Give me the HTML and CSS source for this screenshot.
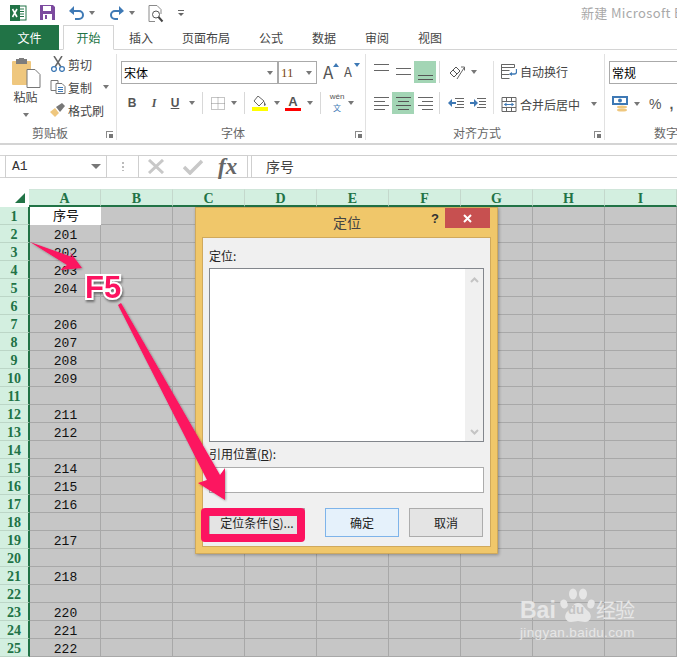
FILE: index.html
```html
<!DOCTYPE html>
<html lang="zh">
<head>
<meta charset="utf-8">
<title>定位</title>
<link rel="stylesheet" href="styles.css">
</head>
<body>
<div class="app">
  <header class="titlebar">
    <svg class="qi xl" width="17" height="16" viewBox="0 0 17 16"><rect x="6" y="1" width="10" height="14" fill="#fff" stroke="#217346"/><path d="M9 4h5M9 6.500h5M9 9h5M9 11.500h5" stroke="#217346"/><rect x="0" y="0" width="10" height="16" fill="#217346"/><path d="M2.500 4l4.500 8M7 4l-4.500 8" stroke="#fff" stroke-width="1.600"/></svg>
    <svg class="qi sv" width="15" height="15" viewBox="0 0 15 15"><path d="M0 0h13l2 2v13H0z" fill="#7c4b9f"/><rect x="3" y="1" width="8" height="5" fill="#fff"/><rect x="3" y="9" width="9" height="6" fill="#fff"/><rect x="5" y="10" width="2" height="4" fill="#7c4b9f"/></svg>
    <svg class="qi un" width="15" height="14" viewBox="0 0 15 14"><path d="M2 5h8a3.500 3.500 0 0 1 0 8H6" fill="none" stroke="#3e79b5" stroke-width="2"/><path d="M5 0v9L0 5z" fill="#3e79b5"/></svg>
    <i class="caret cq1"></i>
    <svg class="qi re" width="15" height="14" viewBox="0 0 15 14"><path d="M13 5H6a3.500 3.500 0 0 0 0 8h3" fill="none" stroke="#3e79b5" stroke-width="2"/><path d="M10 0v9l5-4z" fill="#3e79b5"/></svg>
    <i class="caret cq2"></i>
    <svg class="qi pv" width="16" height="18" viewBox="0 0 16 18"><path d="M1 .500h8l4 4V9M1 .500v16h6" fill="none" stroke="#8a8a8a"/><circle cx="8" cy="9.500" r="3.500" fill="#fff" stroke="#555"/><path d="M10.500 12l4 4.500" stroke="#444" stroke-width="2"/></svg>
    <svg class="qi cu" width="7" height="7" viewBox="0 0 7 7"><path d="M0 .500h6" stroke="#666"/><path d="M0 3h6L3 6z" fill="#666"/></svg>
    <span class="doc">新建 Microsoft E</span>
  </header>

  <nav class="tabs">
    <span class="tab file">文件</span>
    <span class="tab active">开始</span>
    <span class="tab t1">插入</span>
    <span class="tab t2">页面布局</span>
    <span class="tab t3">公式</span>
    <span class="tab t3">数据</span>
    <span class="tab t3">审阅</span>
    <span class="tab t3">视图</span>
  </nav>

  <section class="ribbon">
    <div class="group g-clip">
      <div class="g-body clip-body">
        <div class="paste">
          <svg width="29" height="30" viewBox="0 0 29 30"><rect x="0" y="3" width="19" height="24" rx="1" fill="#efc77e"/><rect x="4" y="1" width="11" height="5" fill="#7d7d7d"/><rect x="7" y="0" width="5" height="3" fill="#7d7d7d"/><path d="M15 11.500h8l5 5v13H15z" fill="#fff" stroke="#777"/></svg>
          <span class="paste-label">粘贴</span>
          <i class="caret"></i>
        </div>
        <div class="clip-list">
          <div class="clip-row">
            <svg width="14" height="16" viewBox="0 0 14 16"><path d="M3 0l7 11M11 0L4 11" stroke="#666" stroke-width="1.500"/><circle cx="3" cy="13" r="2.400" fill="#fff" stroke="#3e79b5" stroke-width="1.300"/><circle cx="11" cy="13" r="2.400" fill="#fff" stroke="#3e79b5" stroke-width="1.300"/></svg>
            <span>剪切</span>
          </div>
          <div class="clip-row">
            <svg width="15" height="14" viewBox="0 0 15 14"><path d="M.500.500h7v10h-7z" fill="#fff" stroke="#777"/><path d="M5.500 3.500h6l3 3v7h-9z" fill="#fff" stroke="#777"/><path d="M7.500 7.500h5M7.500 9.500h5M7.500 11.500h5" stroke="#3e79b5"/></svg>
            <span>复制</span><i class="caret c-copy"></i>
          </div>
          <div class="clip-row">
            <svg width="16" height="14" viewBox="0 0 16 14"><path d="M0 9l5-4 4 5-4 4z" fill="#efc77e"/><path d="M6 4l6-4 3 3-5 6z" fill="#777"/></svg>
            <span>格式刷</span>
          </div>
        </div>
      </div>
      <div class="g-foot"><span class="g-name n-clip">剪贴板</span><i class="launch"></i></div>
    </div>

    <div class="group g-font">
      <div class="g-body font-body">
        <div class="font-row1">
          <div class="combo c-name">宋体<i class="caret"></i></div>
          <div class="combo c-size">11<i class="caret"></i></div>
          <span class="grow">A<i class="up"></i></span>
          <span class="shrink">A<i class="down"></i></span>
        </div>
        <div class="font-row2">
          <b class="fb">B</b>
          <i class="fi">I</i>
          <u class="fu">U</u>
          <i class="caret c-t"></i>
          <i class="vsep"></i>
          <svg class="bord" width="14" height="13" viewBox="0 0 14 13"><path d="M.500.500h13v12H.500zM7 .500v12M.500 6.500h13" fill="none" stroke="#8a8a8a" stroke-dasharray="1 1"/></svg>
          <i class="caret c-s"></i>
          <i class="vsep"></i>
          <svg class="fill" width="16" height="15" viewBox="0 0 16 15"><path d="M6 0l6 5-5 5-5-5z" fill="#fff" stroke="#666"/><path d="M12 5l2 4-2 1z" fill="#666"/><rect y="11" width="16" height="4" fill="#ff0"/></svg>
          <i class="caret c-s"></i>
          <span class="fcolor">A</span>
          <i class="caret c-s"></i>
          <i class="vsep"></i>
          <span class="wen"><small>wén</small><em>文</em></span>
          <i class="caret c-w"></i>
        </div>
      </div>
      <div class="g-foot"><span class="g-name n-font">字体</span><i class="launch"></i></div>
    </div>

    <div class="group g-align">
      <div class="g-body align-body">
        <div class="al-col">
          <div class="al-row">
            <span class="al top"><svg width="15" height="8" viewBox="0 0 15 8"><path d="M0 .500h15M0 6.500h15" stroke="#666"/></svg></span>
            <span class="al"><svg width="15" height="8" viewBox="0 0 15 8"><path d="M0 .500h15M0 6.500h15" stroke="#666"/></svg></span>
            <span class="al on bottom"><svg width="15" height="8" viewBox="0 0 15 8"><path d="M0 .500h15M0 4.500h15" stroke="#555"/></svg></span>
            <i class="vsep sep-a"></i>
            <svg class="orient" width="16" height="15" viewBox="0 0 16 15"><path d="M1 8l6-6 4 4-6 6zM4 5l4 4" fill="none" stroke="#555"/><path d="M8 14L15 3M12 2h3.500v3.500" fill="none" stroke="#666"/></svg>
            <i class="caret c-s"></i>
          </div>
          <div class="al-row r2">
            <span class="al"><svg width="15" height="14" viewBox="0 0 15 14"><path d="M0 1.500h15M0 5.500h11M0 9.500h15M0 13.500h11" stroke="#666"/></svg></span>
            <span class="al on"><svg width="15" height="14" viewBox="0 0 15 14"><path d="M0 1.500h15M2 5.500h11M0 9.500h15M2 13.500h11" stroke="#555"/></svg></span>
            <span class="al"><svg width="15" height="14" viewBox="0 0 15 14"><path d="M0 1.500h15M4 5.500h11M0 9.500h15M4 13.500h11" stroke="#666"/></svg></span>
            <i class="vsep sep-a"></i>
            <svg class="ind" width="16" height="11" viewBox="0 0 16 11"><path d="M7 .500h9M9 3.500h7M9 6.500h7M7 9.500h9" stroke="#666"/><path d="M8 5H3" stroke="#3e79b5" stroke-width="2"/><path d="M4 1v8L0 5z" fill="#3e79b5"/></svg>
            <svg class="ind2" width="16" height="11" viewBox="0 0 16 11"><path d="M7 .500h9M9 3.500h7M9 6.500h7M7 9.500h9" stroke="#666"/><path d="M0 5h4" stroke="#3e79b5" stroke-width="2"/><path d="M4 1v8l4-4z" fill="#3e79b5"/></svg>
          </div>
        </div>
        <i class="vsep tall"></i>
        <div class="wrap-col">
          <div class="wrap-row">
            <svg width="16" height="15" viewBox="0 0 16 15"><path d="M.500.500h13v3H.500zM.500 6.500h8M.500 10.500h8M.500 14.500h8M.500.500v14" fill="none" stroke="#666"/><path d="M15.500 5v3a2 2 0 0 1-2 2H9" fill="none" stroke="#3e79b5" stroke-width="1.300"/><path d="M11 8v4L8 10z" fill="#3e79b5"/></svg>
            <span>自动换行</span>
          </div>
          <div class="wrap-row r2">
            <svg width="15" height="15" viewBox="0 0 15 15"><path d="M.500.500h14v14H.500zM.500 4.500h14M.500 10.500h14M5 .500v4M10 .500v4M5 10.500v4M10 10.500v4" fill="none" stroke="#666"/><path d="M3 7.500h9" stroke="#3e79b5"/><path d="M5 5.500v4L2.500 7.500zM10 5.500v4l2.500-2z" fill="#3e79b5"/></svg>
            <span>合并后居中</span><i class="caret c-merge"></i>
          </div>
        </div>
      </div>
      <div class="g-foot"><span class="g-name n-align">对齐方式</span><i class="launch"></i></div>
    </div>

    <div class="group g-num">
      <div class="g-body num-body">
        <div class="combo c-num">常规</div>
        <div class="num-row">
          <svg width="16" height="16" viewBox="0 0 16 16"><rect width="16" height="9" fill="#3e79b5"/><rect x="2" y="2" width="12" height="5" fill="#fff"/><circle cx="8" cy="4.500" r="2" fill="#3e79b5"/><ellipse cx="10" cy="11" rx="5" ry="1.500" fill="#efc77e"/><ellipse cx="10" cy="14" rx="5" ry="1.500" fill="#efc77e"/></svg>
          <i class="caret c-s"></i>
          <span class="pct">%</span>
          <span class="cma">,</span>
        </div>
      </div>
      <div class="g-foot"><span class="g-name n-num">数字</span></div>
    </div>
  </section>

  <section class="formula">
    <div class="namebox">A1<i class="caret big"></i></div>
    <span class="grip"></span>
    <div class="fx-btns">
      <svg width="18" height="15" viewBox="0 0 18 15"><path d="M2 1l14 13M16 1L2 14" stroke="#c8c8c8" stroke-width="3"/></svg>
      <svg width="20" height="16" viewBox="0 0 20 16"><path d="M1 8l6 6L19 2" fill="none" stroke="#c8c8c8" stroke-width="3.500"/></svg>
      <span class="fx">fx</span>
    </div>
    <div class="finput">序号</div>
  </section>

  <section class="sheet">
    <div class="colhead">
      <div class="corner"><i></i></div>
      <span class="ch first">A</span><span class="ch">B</span><span class="ch">C</span><span class="ch">D</span><span class="ch">E</span><span class="ch">F</span><span class="ch">G</span><span class="ch">H</span><span class="ch">I</span>
    </div>
    <div class="rows">
      <div class="row"><span class="rh">1</span><span class="ca hd">序号</span><span class="rest"></span></div>
      <div class="row"><span class="rh">2</span><span class="ca">201</span><span class="rest"></span></div>
      <div class="row"><span class="rh">3</span><span class="ca">202</span><span class="rest"></span></div>
      <div class="row"><span class="rh">4</span><span class="ca">203</span><span class="rest"></span></div>
      <div class="row"><span class="rh">5</span><span class="ca">204</span><span class="rest"></span></div>
      <div class="row"><span class="rh">6</span><span class="ca"></span><span class="rest"></span></div>
      <div class="row"><span class="rh">7</span><span class="ca">206</span><span class="rest"></span></div>
      <div class="row"><span class="rh">8</span><span class="ca">207</span><span class="rest"></span></div>
      <div class="row"><span class="rh">9</span><span class="ca">208</span><span class="rest"></span></div>
      <div class="row"><span class="rh">10</span><span class="ca">209</span><span class="rest"></span></div>
      <div class="row"><span class="rh">11</span><span class="ca"></span><span class="rest"></span></div>
      <div class="row"><span class="rh">12</span><span class="ca">211</span><span class="rest"></span></div>
      <div class="row"><span class="rh">13</span><span class="ca">212</span><span class="rest"></span></div>
      <div class="row"><span class="rh">14</span><span class="ca"></span><span class="rest"></span></div>
      <div class="row"><span class="rh">15</span><span class="ca">214</span><span class="rest"></span></div>
      <div class="row"><span class="rh">16</span><span class="ca">215</span><span class="rest"></span></div>
      <div class="row"><span class="rh">17</span><span class="ca">216</span><span class="rest"></span></div>
      <div class="row"><span class="rh">18</span><span class="ca"></span><span class="rest"></span></div>
      <div class="row"><span class="rh">19</span><span class="ca">217</span><span class="rest"></span></div>
      <div class="row"><span class="rh">20</span><span class="ca"></span><span class="rest"></span></div>
      <div class="row"><span class="rh">21</span><span class="ca">218</span><span class="rest"></span></div>
      <div class="row"><span class="rh">22</span><span class="ca"></span><span class="rest"></span></div>
      <div class="row"><span class="rh">23</span><span class="ca">220</span><span class="rest"></span></div>
      <div class="row"><span class="rh">24</span><span class="ca">221</span><span class="rest"></span></div>
      <div class="row"><span class="rh">25</span><span class="ca">222</span><span class="rest"></span></div>
    </div>
  </section>

  <div class="dialog">
    <div class="d-title">
      <span class="d-name">定位</span>
      <span class="d-help">?</span>
      <span class="d-close"><svg width="9" height="9" viewBox="0 0 9 9"><path d="M1 1l7 7M8 1L1 8" stroke="#fff" stroke-width="2"/></svg></span>
    </div>
    <div class="d-panel">
      <label class="d-label">定位:</label>
      <div class="d-list">
        <div class="d-scroll">
          <svg width="9" height="6" viewBox="0 0 9 6"><path d="M1 5l3.500-3.500L8 5" fill="none" stroke="#c4c4c4" stroke-width="2"/></svg>
          <svg width="9" height="6" viewBox="0 0 9 6"><path d="M1 1l3.500 3.500L8 1" fill="none" stroke="#c4c4c4" stroke-width="2"/></svg>
        </div>
      </div>
      <label class="d-label d-ref">引用位置(<u>R</u>):</label>
      <div class="d-input"></div>
      <div class="d-btns">
        <button class="btn special">定位条件(<u>S</u>)...</button>
        <button class="btn ok">确定</button>
        <button class="btn">取消</button>
      </div>
    </div>
  </div>

  <svg class="arrows" width="677" height="657" viewBox="0 0 677 657">
    <defs><filter id="sh" x="-20%" y="-20%" width="140%" height="140%"><feDropShadow dx="1" dy="1" stdDeviation="1" flood-color="#000" flood-opacity=".35"/></filter></defs>
    <g fill="#fc1360" filter="url(#sh)">
      <path d="M30 242L72 257L70 252L82 268L60 270L67 265Z"/>
      <path d="M118 305L121 303L220 475L225 468L225 500L198 483L207 480Z"/>
    </g>
  </svg>
  <span class="f5">F5</span>
  <div class="callout"></div>

  <div class="mark">
    <div class="mark-top">
      <span class="m-bai">Bai</span>
      <svg class="paw" width="36" height="40" viewBox="0 0 36 40"><ellipse cx="4" cy="19" rx="3.500" ry="4.500" fill="#e6e6e6" transform="rotate(-20 4 19)"/><ellipse cx="13" cy="9" rx="4" ry="5.500" fill="#e6e6e6"/><ellipse cx="23" cy="9" rx="4" ry="5.500" fill="#e6e6e6"/><ellipse cx="31" cy="19" rx="3.500" ry="4.500" fill="#e6e6e6" transform="rotate(20 31 19)"/><path d="M18 18c5 0 6 5 10 8 5 4 3 11-3 11-3 0-5-1-7-1s-4 1-7 1c-6 0-8-7-3-11 4-3 5-8 10-8z" fill="#e6e6e6"/></svg>
      <span class="m-du">du</span>
      <span class="m-cn">经验</span>
    </div>
    <div class="m-url">jingyan.baidu.com</div>
  </div>
</div>
</body>
</html>
```
FILE: styles.css
```css
* { box-sizing: border-box; }
html, body { margin: 0; padding: 0; background: #fff; }
body { font-family: "Noto Sans CJK SC", "Noto Sans", sans-serif; font-size: 12px; color: #444; }
.app { position: relative; width: 677px; height: 657px; overflow: hidden; }
i { font-style: normal; }

.caret { display: inline-block; width: 0; height: 0; border-left: 3.5px solid transparent; border-right: 3.5px solid transparent; border-top: 4px solid #777; flex: none; }
.caret.big { border-left-width: 5px; border-right-width: 5px; border-top-width: 5px; }
.vsep { display: block; width: 1px; height: 22px; background: #d8d8d8; flex: none; }

/* title bar */
.titlebar { height: 25px; display: flex; align-items: center; padding-left: 10px; white-space: nowrap; }
.qi { flex: none; }
.sv { margin-left: 13px; }
.un { margin-left: 14px; }
.cq1 { margin-left: 5px; }
.re { margin-left: 14px; }
.cq2 { margin-left: 5px; }
.pv { margin-left: 13px; margin-top: 3px; }
.cu { margin-left: 14px; margin-top: 2px; }
.doc { margin-left: 396px; font-size: 13px; color: #a9a9a9; letter-spacing: .35px; flex: none; }

/* tabs */
.tabs { height: 25px; display: flex; align-items: stretch; border-bottom: 1px solid #d4d4d4; }
.tab { display: flex; align-items: center; justify-content: center; font-size: 12px; color: #444; height: 25px; flex: none; }
.file { width: 59px; height: 25px; background: #217346; color: #fff; }
.active { width: 51px; margin-left: 4px; background: #fff; color: #217346; border: 1px solid #d4d4d4; border-bottom-color: #fff; }
.t1 { margin-left: 15px; width: 24px; }
.t2 { margin-left: 29px; width: 48px; }
.t3 { margin-left: 29px; width: 24px; }

/* ribbon */
.ribbon { height: 95px; display: flex; border-bottom: 2px solid #d4d4d4; overflow: hidden; }
.group { display: flex; flex-direction: column; border-right: 1px solid #e1e1e1; margin-top: 4px; flex: none; height: 86px; }
.g-body { height: 70px; flex: none; }
.g-foot { position: relative; height: 16px; display: flex; align-items: center; color: #666; font-size: 12px; }
.g-name { display: block; }
.launch { position: absolute; right: 3px; top: 7px; width: 7px; height: 7px; border: 1px solid #8a8a8a; border-width: 1px 0 0 1px; }
.launch::after { content: ""; position: absolute; right: 0; bottom: 0; width: 4px; height: 4px; background: #777; }

.g-clip { width: 117px; }
.clip-body { display: flex; padding-top: 4px; }
.paste { width: 50px; padding-left: 12px; display: flex; flex-direction: column; align-items: flex-start; }
.paste-label { display: block; width: 29px; margin-left: -1px; margin-top: 0; line-height: 17px; text-align: center; color: #444; }
.paste .caret { margin: 8px 0 0 11px; }
.clip-list { display: flex; flex-direction: column; gap: 7px; margin-top: -2px; }
.clip-row { display: flex; align-items: center; height: 16px; gap: 2px; color: #444; }
.clip-row svg { width: 16px; flex: none; }
.c-copy { margin-left: 9px; }
.n-clip { margin-left: 32px; }

.g-font { width: 249px; }
.font-body { padding: 7px 0 0 4px; }
.font-row1 { display: flex; align-items: center; height: 22px; }
.combo { position: relative; height: 23px; background: #fff; border: 1px solid #aaa; font-family: "Liberation Serif", "Noto Sans CJK SC", serif; color: #000; font-size: 13px; line-height: 21px; padding-left: 2px; flex: none; }
.combo .caret { position: absolute; right: 4px; top: 9px; }
.c-name { width: 157px; font-family: "Noto Sans CJK SC", sans-serif; font-size: 12px; }
.c-size { width: 39px; color: #7a4a10; }
.grow, .shrink { position: relative; display: block; font-weight: 400; color: #555; flex: none; }
.grow { font-size: 17px; margin-left: 6px; width: 21px; line-height: 20px; }
.shrink { font-size: 13px; width: 16px; line-height: 20px; }
.up, .down { position: absolute; left: 10px; top: 1px; width: 0; height: 0; border-left: 3px solid transparent; border-right: 3px solid transparent; }
.up { border-bottom: 4px solid #3e79b5; }
.down { border-top: 4px solid #3e79b5; }
.font-row2 { display: flex; align-items: center; height: 22px; margin-top: 9px; }
.fb, .fi, .fu { display: block; width: 22px; text-align: center; font-family: "Liberation Sans", sans-serif; font-size: 12px; color: #555; flex: none; }
.fi { font-family: "Liberation Serif", serif; font-style: italic; font-weight: 700; }
.fu { width: 20px; font-weight: 700; }
.c-s { margin-left: 6px; }
.c-t { margin-left: 4px; }
.c-w { margin-left: 3px; }
.font-row2 .vsep { margin: 0 8px 0 7px; }
.bord { flex: none; }
.fill { margin-left: -1px; flex: none; }
.fcolor { width: 16px; margin-left: 5px; text-align: center; font-family: "Liberation Sans", sans-serif; font-weight: 700; font-size: 13px; line-height: 13px; color: #555; border-bottom: 3px solid #f00; flex: none; }
.wen { display: flex; flex-direction: column; width: 16px; align-items: center; color: #555; flex: none; }
.wen small { font-family: "Liberation Sans", sans-serif; font-size: 8px; line-height: 10px; height: 10px; }
.wen em { font-style: normal; font-size: 8px; line-height: 12px; height: 12px; color: #3e79b5; }
.n-font { margin-left: 104px; }

.g-align { width: 239px; }
.align-body { display: flex; padding: 7px 0 0 0; }
.al-col { width: 127px; display: flex; flex-direction: column; gap: 9px; padding-left: 4px; }
.al-row { display: flex; align-items: center; height: 22px; }
.al { display: flex; width: 22px; height: 22px; align-items: center; justify-content: center; flex: none; }
.al.on { background: #a3d5b5; }
.al.top { align-items: flex-start; padding-top: 3px; }
.al.bottom { align-items: flex-end; padding-bottom: 0; }
.sep-a { margin: 0 8px 0 3px; }
.orient { flex: none; margin-left: 1px; }
.ind { flex: none; }
.ind2 { margin-left: 6px; flex: none; }
.tall { height: 53px; background: #e1e1e1; }
.wrap-col { padding-left: 7px; display: flex; flex-direction: column; gap: 11px; margin-top: -1px; }
.wrap-row { display: flex; align-items: center; height: 22px; gap: 3px; color: #444; }
.wrap-row svg { flex: none; width: 16px; }
.c-merge { margin-left: 8px; }
.n-align { margin-left: 87px; }

.g-num { flex: 1; border-right: 0; }
.num-body { padding: 7px 0 0 4px; }
.c-num { width: 100px; font-family: "Noto Sans CJK SC", sans-serif; font-size: 12px; }
.num-row { display: flex; align-items: center; height: 22px; margin-top: 9px; padding-left: 3px; color: #555; }
.num-row svg { flex: none; }
.pct { margin-left: 9px; font-family: "Liberation Sans", sans-serif; font-size: 14px; }
.cma { margin-left: 8px; font-family: "Liberation Sans", sans-serif; font-size: 14px; font-weight: 700; }
.n-num { margin-left: 49px; white-space: nowrap; }

/* formula bar */
.formula { height: 23px; margin-top: 10px; display: flex; align-items: stretch; border-top: 1px solid #d4d4d4; border-bottom: 1px solid #d4d4d4; background: #fff; padding-left: 5px; }
.namebox { position: relative; width: 102px; margin: -1px 0; border: 1px solid #cfcfcf; font-family: "Liberation Mono", monospace; font-size: 13px; line-height: 21px; color: #333; padding-left: 6px; flex: none; }
.namebox .caret { position: absolute; right: 5px; top: 8px; }
.grip { width: 2px; height: 9px; margin: 6px 14px 0 15px; background: repeating-linear-gradient(to bottom, #bbb 0 2px, transparent 2px 4px); flex: none; }
.fx-btns { width: 110px; margin: -1px 0; border: 1px solid #cfcfcf; display: flex; align-items: center; padding-left: 8px; gap: 18px; flex: none; }
.fx { font-family: "Liberation Serif", serif; font-style: italic; font-weight: 700; font-size: 23px; color: #666; line-height: 20px; margin-left: -3px; }
.finput { flex: 1; margin: -1px 0 -1px 3px; border: 1px solid #cfcfcf; border-right: 0; font-size: 14px; color: #444; line-height: 21px; padding-left: 14px; }

/* sheet */
.sheet { margin-top: 11px; }
.colhead { display: flex; height: 18px; border-bottom: 0; }
.corner { position: relative; width: 29px; flex: none; }
.corner i { position: absolute; left: 15px; top: 4px; width: 0; height: 0; border-left: 10px solid transparent; border-bottom: 10px solid #217346; }
.ch { width: 72px; height: 18px; background: #d3efe0; border-top: 1px solid #d0e6da; border-right: 1px solid #c4d8cc; text-align: center; font-family: "Liberation Serif", serif; font-weight: 700; font-size: 14px; line-height: 17px; color: #217346; flex: none; border-bottom: 2px solid #217346; }
.rows { display: block; }
.row { display: flex; height: 18px; }
.rh { width: 30px; height: 18px; background: #d3efe0; border-right: 2px solid #217346; border-bottom: 1px solid #bcd6c7; text-align: center; font-family: "Liberation Serif", serif; font-weight: 700; font-size: 14px; line-height: 20px; color: #217346; flex: none; }
.ca { width: 71px; height: 18px; background: #c6c6c6; border-right: 1px solid #a8a8a8; border-bottom: 1px solid #a8a8a8; text-align: center; font-family: "Liberation Mono", monospace; font-size: 13px; line-height: 21px; color: #111; flex: none; padding-left: 1px; }
.ca.hd { background: #fff; border-right: 0; border-bottom: 0; font-family: "Noto Sans CJK SC", sans-serif; font-size: 13px; line-height: 16px; width: 71px; }
.rest { flex: 1; height: 18px; background-color: #c6c6c6; border-bottom: 1px solid #a8a8a8; background-image: repeating-linear-gradient(to right, transparent 0 71px, #a8a8a8 71px 72px); }

/* dialog */
.dialog { position: absolute; left: 195px; top: 207px; width: 303px; height: 347px; background: #f0c76a; border: 1px solid #cfa95c; box-shadow: 1px 1px 3px rgba(0,0,0,.3); padding: 0 6px 6px 6px; display: flex; flex-direction: column; }
.d-title { position: relative; height: 29px; flex: none; display: flex; justify-content: center; }
.d-name { font-size: 14px; line-height: 28px; color: #444; margin-left: 1px; }
.d-help { position: absolute; left: 229px; top: 0; font-family: "Liberation Sans", sans-serif; font-weight: 700; font-size: 13px; line-height: 21px; color: #333; }
.d-close { position: absolute; right: 1px; top: 0; width: 45px; height: 20px; background: #c75050; display: flex; align-items: center; justify-content: center; }
.d-panel { flex: 1; background: #f0f0f0; border: 1px solid #d0a95c; padding: 9px 6px 0 6px; display: flex; flex-direction: column; }
.d-label { display: block; font-size: 12px; line-height: 18px; color: #222; height: 21px; flex: none; }
.d-list { height: 174px; background: #fff; border: 1px solid #82868c; border-right-color: #82868c; display: flex; justify-content: flex-end; flex: none; width: 275px; }
.d-scroll { width: 18px; background: #f0f0f0; display: flex; flex-direction: column; align-items: center; justify-content: space-between; padding: 8px 0 6px; }
.d-ref { margin-top: 3px; height: 22px; }
.d-input { width: 275px; height: 26px; background: #fff; border: 1px solid #acacac; flex: none; }
.d-btns { display: flex; margin-top: 15px; width: 274px; }
.btn { height: 29px; width: 74px; font-family: "Noto Sans CJK SC", sans-serif; font-size: 12px; color: #222; background: #e4e4e4; border: 1px solid #acacac; padding: 0; margin-left: 10px; flex: none; }
.special { width: 96px; margin-left: 0; margin-right: 10px; }
.ok { background: #e5f1fb; border-color: #7eb4ea; }

/* annotations */
.arrows { position: absolute; left: 0; top: 0; pointer-events: none; }
.f5 { position: absolute; left: 85px; top: 268px; font-family: "Liberation Sans", sans-serif; font-weight: 700; font-size: 31px; line-height: 40px; color: #fc1360; -webkit-text-stroke: 4px #fff; paint-order: stroke fill; filter: drop-shadow(1px 2px 1px rgba(0,0,0,.45)); }
.callout { position: absolute; left: 201px; top: 508px; width: 104px; height: 34px; border: 8px solid #fc1360; border-radius: 4px; }

/* watermark */
.mark { position: absolute; left: 520px; top: 583px; width: 125px; color: #e6e6e6; }
.mark-top { position: relative; height: 42px; }
.m-bai { position: absolute; left: 0; top: 14px; font-family: "Liberation Sans", sans-serif; font-weight: 700; font-size: 23px; line-height: 26px; }
.paw { position: absolute; left: 40px; top: 2px; }
.m-du { position: absolute; left: 48px; top: 20px; font-family: "Liberation Sans", sans-serif; font-weight: 700; font-size: 13px; line-height: 14px; color: #c4c4c4; }
.m-cn { position: absolute; left: 76px; top: 16px; font-size: 20px; line-height: 22px; white-space: nowrap; letter-spacing: -1px; }
.m-url { font-family: "Liberation Sans", sans-serif; font-size: 13.5px; line-height: 16px; margin-top: 0; white-space: nowrap; letter-spacing: .35px; }
```
